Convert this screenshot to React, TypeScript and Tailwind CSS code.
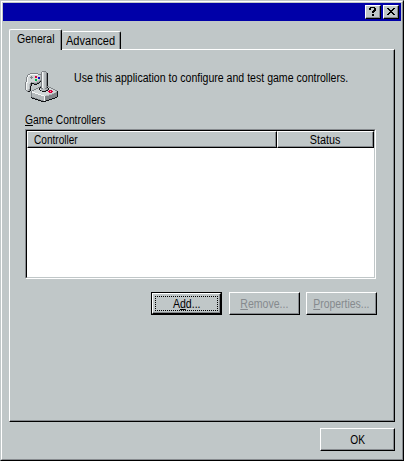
import type { ReactNode } from "react";

const raised =
  "border border-t-white border-l-white border-r-black border-b-black shadow-[inset_-1px_-1px_0_#868a8e]";

function Label({ children, className = "" }: { children: ReactNode; className?: string }) {
  return (
    <span className={`block w-max whitespace-nowrap text-[12px] leading-[14px] ${className}`}>
      {children}
    </span>
  );
}

function Key({ children }: { children: ReactNode }) {
  return <span className="underline decoration-1 underline-offset-1">{children}</span>;
}

const palette: Record<string, string> = {
  G: "#808488",
  C: "#b4b9bb",
  L: "#d2d7d8",
  W: "#f4f6f6",
  K: "#101214",
  R: "#d8003c",
  P: "#ff9ab8",
  B: "#1010c0",
  N: "#00b050",
};

// Game pad behind a joystick, one character per pixel.
const iconRows = [
  ".................GGGG",
  "................GWLCCG",
  ".....GGGGGGGG...GWLCCGK",
  "...GGWWWWWWWWGGGGWLCCGK",
  "..GWWLLLLLLLLLLCGWLCCGK",
  "..GWLLGLLLRRLLLCGWLCCGK",
  ".GWLLGGGLLRRLBBCGWLCCGK",
  ".GWLLLGLLLLLLBBCGWLCCGK",
  ".GWLLLLLLLNNLLCCGWLCCGK",
  ".GWLLLLLLLNNLCCGGWLCCGK",
  ".GWLLLLLLLLCCCGKGWLCCGK",
  "GWWLLLGCCCCCGGK.GWLCCGK",
  "GWLLLGKKKGGGKK..GWLCCGK",
  "GWLLCGK..KKK....GWLCCGK",
  "GWLLCGK.........GWLCCGK",
  "GWLLCK.........GGWLCCGGG",
  "GWLLCK.......GGKGWLCCGKLGG",
  "GWLLCK.....GGLKCGGLCGGCKLLGG",
  "GWLCGK...GGLLLKWCCCCCCGKLLLLGG",
  ".GCCGK.GGLLLLLLKGCCCGKKLRRRLLLGG",
  "..GKK.GWLLLLLLLLLKKKKLLRRPRRLLLCK",
  "......GWWWLLLLLLLLLLLLLLRRRLLLCGK",
  "......GCCCWWWLLLLLLLLLLLLLLCCGGGK",
  "......GCCCCCCWWWLLLLLLLLCCCGGGGGK",
  "......GCCCCCCCCCWWWLLCCCGGGGGGGGK",
  "......GCCCCCCCCCCCCWGGGGGGGGGGGGK",
  "......KGGCCCCCCCCCCWGGGGGGGGGGKK",
  ".......KKKGGCCCCCCCWGGGGGGGKKK",
  "..........KKKGGCCCCWGGGGKKK",
  ".............KKKGGCWGKKK",
  "................KKKKK",
];

function GameIcon() {
  return (
    <svg width="33" height="31" viewBox="0 0 33 31" shapeRendering="crispEdges" className="mt-px shrink-0">
      {iconRows.flatMap((row, y) =>
        row.split("").map((c, x) =>
          c === "." ? null : <rect key={`${x}-${y}`} x={x} y={y} width="1" height="1" fill={palette[c]} />
        )
      )}
    </svg>
  );
}

function HelpGlyph() {
  return (
    <svg width="14" height="12" viewBox="0 0 14 12" shapeRendering="crispEdges">
      <path d="M4 1h5v1h1v3h-1v1h-1v1h-2v-2h1v-1h1v-2h-3v2h-2v-2h1zM6 8h2v2h-2z" />
    </svg>
  );
}

function CloseGlyph() {
  return (
    <svg width="14" height="12" viewBox="0 0 14 12" shapeRendering="crispEdges">
      <path d="M3 2h2v1h1v1h2v-1h1v-1h2v1h-1v1h-1v1h-1v1h1v1h1v1h1v1h-2v-1h-1v-1h-2v1h-1v1h-2v-1h1v-1h1v-1h1v-1h-1v-1h-1v-1h-1z" />
    </svg>
  );
}

export default function App() {
  return (
    <div className="h-[461px] w-[404px] select-none overflow-hidden border border-t-[#c0c7c8] border-l-[#c0c7c8] border-r-black border-b-black bg-[#c0c7c8] font-['Liberation_Sans',Arial,sans-serif] text-black">
      <div className="flex h-[459px] w-[402px] flex-col border border-t-white border-l-white border-r-[#868a8e] border-b-[#868a8e] p-px">
        <header className="flex h-[18px] shrink-0 items-center justify-end gap-[2px] bg-[#0000a8] pr-[2px]">
          <button aria-label="Help" className={`h-[14px] w-4 bg-[#c0c7c8] ${raised}`}>
            <HelpGlyph />
          </button>
          <button aria-label="Close" className={`h-[14px] w-4 bg-[#c0c7c8] ${raised}`}>
            <CloseGlyph />
          </button>
        </header>

        <main className="ml-[6px] mt-2 w-[386px]">
          <nav className="flex h-5 items-end">
            <div className="z-10 -mb-px h-[21px] w-[53px] rounded-t-[2px] border border-b-0 border-t-white border-l-white border-r-black bg-[#c0c7c8] pl-[7px] pt-[2px] shadow-[inset_-1px_0_0_#868a8e]">
              <Label className="origin-left scale-x-[.88]">General</Label>
            </div>
            <div className="h-[18px] w-[59px] rounded-t-[2px] border border-b-0 border-t-white border-l-0 border-r-black pl-[4px] pt-[2px] shadow-[inset_-1px_0_0_#868a8e]">
              <Label className="origin-left scale-x-[.92]">Advanced</Label>
            </div>
          </nav>
          <section className={`h-[373px] pl-[15px] ${raised}`}>
            <div className="flex h-[63px] pt-5">
              <GameIcon />
              <Label className="ml-[16px] mt-px origin-left scale-x-[.88]">
                Use this application to configure and test game controllers.
              </Label>
            </div>
            <Label className="origin-left scale-x-[.855]">
              <Key>G</Key>ame Controllers
            </Label>
            <div className="mt-[2px] h-[150px] w-[351px] border border-t-[#868a8e] border-l-[#868a8e] border-r-white border-b-white">
              <div className="h-[148px] w-[349px] border border-t-black border-l-black border-r-[#c0c7c8] border-b-[#c0c7c8] bg-white">
                <div className="flex h-[17px] bg-[#c0c7c8]">
                  <div className={`w-[250px] pl-[6px] pt-px ${raised}`}>
                    <Label className="origin-left scale-x-[.84]">Controller</Label>
                  </div>
                  <div className={`flex flex-1 justify-center pt-px ${raised}`}>
                    <Label className="scale-x-[.9]">Status</Label>
                  </div>
                </div>
              </div>
            </div>
            <div className="ml-[126px] mt-[13px] flex">
              <button className="h-[23px] w-[71px] border border-black">
                <span className={`flex h-[21px] w-[69px] p-[2px] ${raised}`}>
                  <span className="flex flex-1 items-center justify-center border border-dotted border-black">
                    <Label className="scale-x-[.88]">A<Key>d</Key>d...</Label>
                  </span>
                </span>
              </button>
              <button className={`ml-[7px] flex h-[23px] w-[71px] items-center justify-center text-[#868a8e] ${raised}`}>
                <Label className="scale-x-[.88]"><Key>R</Key>emove...</Label>
              </button>
              <button className={`ml-[6px] flex h-[23px] w-[71px] items-center justify-center text-[#868a8e] ${raised}`}>
                <Label className="scale-x-[.87]"><Key>P</Key>roperties...</Label>
              </button>
            </div>
          </section>
          <footer className="mt-[6px] flex justify-end">
            <button className={`flex h-[23px] w-[75px] items-center justify-center ${raised}`}>
              <Label className="scale-x-[.85]">OK</Label>
            </button>
          </footer>
        </main>
      </div>
    </div>
  );
}
